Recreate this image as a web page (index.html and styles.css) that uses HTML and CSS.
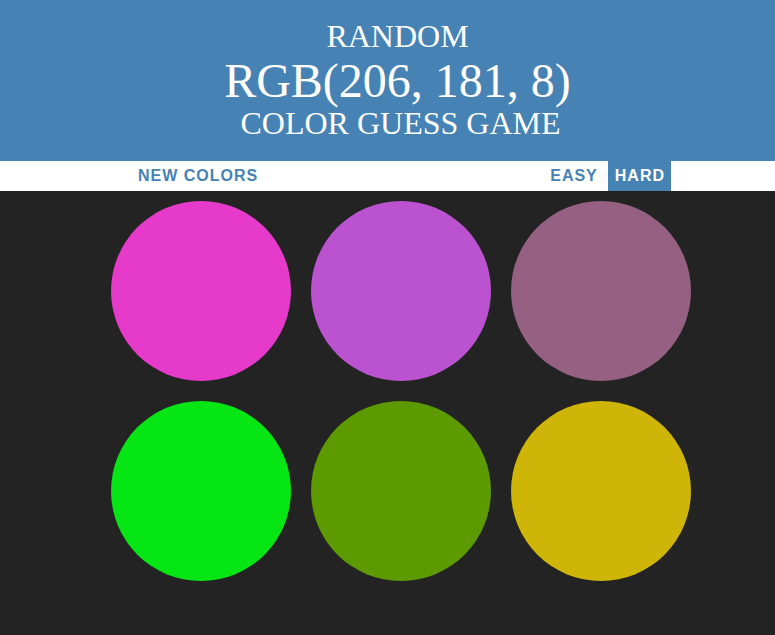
FILE: index.html
```html
<!DOCTYPE html>
<html>
<head>
<meta charset="utf-8">
<title>Color Guess Game</title>
<link rel="stylesheet" href="styles.css">
</head>
<body>
<div class="page">
  <header class="header">
    <span class="line-small">RANDOM</span>
    <span class="line-big">RGB(206, 181, 8)</span>
    <span class="line-last">COLOR GUESS GAME</span>
  </header>
  <nav class="stripe">
    <div class="stripe-inner">
      <button class="btn">NEW COLORS</button>
      <div class="modes">
        <button class="btn">EASY</button>
        <button class="btn selected">HARD</button>
      </div>
    </div>
  </nav>
  <main class="container">
    <div class="square" style="background: #e63acb"></div>
    <div class="square" style="background: #bb53d1"></div>
    <div class="square" style="background: #966083"></div>
    <div class="square" style="background: #05e614"></div>
    <div class="square" style="background: #5c9a00"></div>
    <div class="square" style="background: #ceb508"></div>
  </main>
</div>
</body>
</html>
```

FILE: styles.css
```css
html, body {
  margin: 0;
  padding: 0;
  overflow: hidden;
  background: #232323;
  height: 100%;
}

.page {
  width: 802px;
}

.header {
  background: #4682b4;
  color: #ffffff;
  text-align: center;
  font-family: "Liberation Serif", "Times New Roman", serif;
  font-weight: normal;
  padding: 19px 7px 21px 0;
  height: 121px;
}

.line-small {
  display: block;
  font-size: 32px;
  line-height: 35px;
}

.line-big {
  display: block;
  font-size: 48px;
  line-height: 53px;
}

.line-last {
  display: block;
  font-size: 32px;
  line-height: 32px;
  padding-left: 6px;
}

.stripe {
  background: #ffffff;
  height: 30px;
}

.stripe-inner {
  width: 540px;
  margin: 0 auto;
  padding: 0 30px;
  display: flex;
  justify-content: space-between;
  height: 30px;
}

.modes {
  display: flex;
  gap: 3px;
}

.btn {
  border: none;
  background: none;
  margin: 0;
  padding: 0 7px;
  height: 30px;
  line-height: 30px;
  font-family: "Liberation Sans", Arial, sans-serif;
  font-weight: bold;
  font-size: 16px;
  letter-spacing: 1px;
  color: #4682b4;
  text-transform: uppercase;
  cursor: pointer;
}

.btn.selected {
  background: #4682b4;
  color: #ffffff;
  padding: 0 6px 0 7px;
}

.container {
  width: 600px;
  margin: 0 auto;
  padding-top: 10px;
  display: flex;
  flex-wrap: wrap;
}

.square {
  width: 180px;
  height: 180px;
  margin: 0 10px 20px;
  border-radius: 50%;
}
```
